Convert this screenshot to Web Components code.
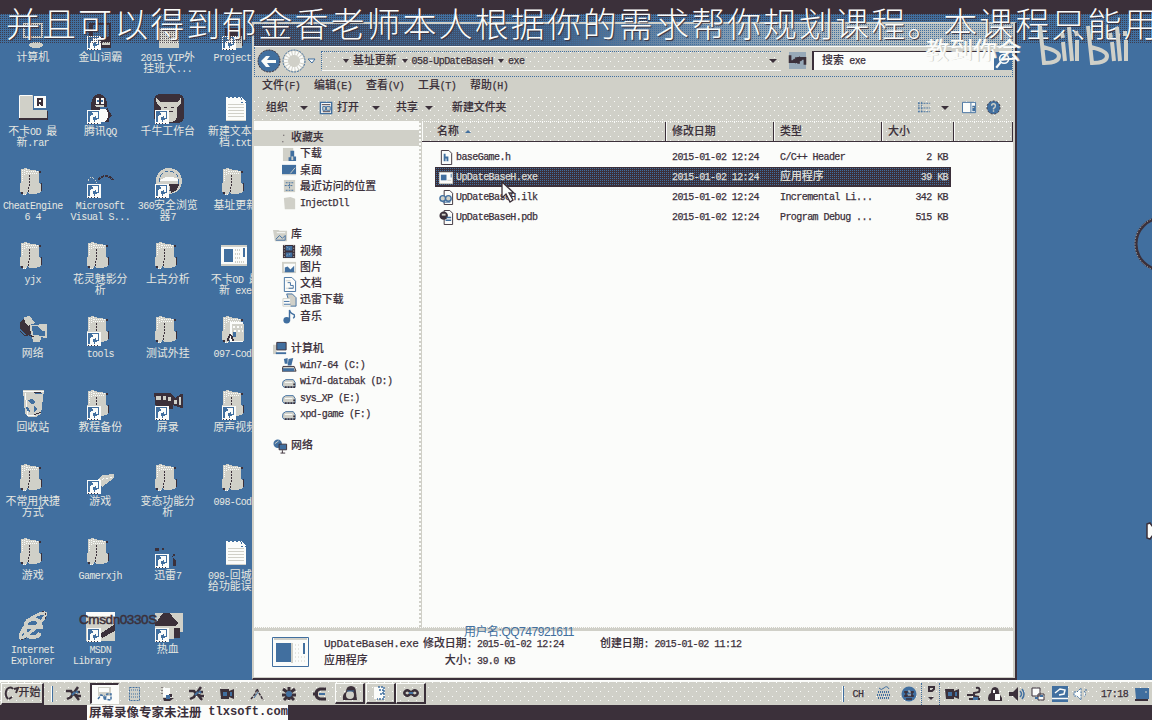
<!DOCTYPE html>
<html lang="zh"><head><meta charset="utf-8"><title>Desktop</title>
<style>
html,body{margin:0;width:1152px;height:720px;overflow:hidden;background:#3b303a}
body{font:10.9px/16px "Liberation Mono","Noto Sans CJK SC",monospace;color:#3b303a;position:relative}
</style></head><body>
<desk-screen></desk-screen>
<script>
const BASE=`:host{display:block;box-sizing:border-box}*{box-sizing:border-box}
.l{font-family:"Liberation Mono",monospace;font-size:10px;letter-spacing:-.57px;line-height:0;-webkit-text-stroke:.25px currentColor}
.c{font-family:"Noto Sans CJK SC",sans-serif;font-size:10.9px;line-height:0;font-weight:500;-webkit-text-stroke:.12px currentColor}
.run{white-space:pre}
.noise{background:conic-gradient(at 1px 1px,transparent 75%,#fbfcfa 0) 0 0/8px 9px,conic-gradient(at 1px 1px,transparent 75%,#fbfcfa 0) 4px 5px/8px 9px,#d0d0c8}`;
const run=s=>'<span class="run">'+s.replace(/[\x20-\x7e]+|[^\x20-\x7e]+/g,m=>`<span class="${m.charCodeAt(0)<127?'l':'c'}">${m}</span>`)+'</span>';
function define(name,html,css){
  customElements.define(name,class extends HTMLElement{
    connectedCallback(){
      if(this.shadowRoot)return;
      const r=this.attachShadow({mode:'open'});
      r.innerHTML=`<style>${BASE}${css}</style>${typeof html==='function'?html(this):html}`;
    }
  });
}
const D='#3b303a',B='#416f9f',G='#d0d0c8',W='#fbfcfa';
const folder=`<path fill="${D}" d="M22 5h2v12h1v8h-1V7h-2zM4 26h3v2H4z"/><path fill="${G}" d="M4 3l6-1v1l12 2v12l2 1v8l-6 2h-6l-1-3-2 4H6V26H3V17H4z"/><path stroke="${W}" stroke-dasharray="1 1" d="M5 4v12M7 4v6M9 3v5M10 5h11M11 7h9M6 28h3"/><path stroke="${D}" fill="none" stroke-dasharray="2 1" d="M12.500 9v10l-1 1v7"/>`;
const badge=`<path fill="${W}" d="M3 18h14v14H3z"/><path fill="${B}" d="M4 19h11v11H4z"/><path fill="${W}" d="M8 20h6v6h-2v-2h-1v1H9v3h1v2H6v-6h1v-1h2v-2H8zM13 27h2v3h-4v-2h2z"/><path stroke="${D}" stroke-dasharray="1 2" d="M4 31.500h12"/>`;
const page=`<path fill="${W}" d="M7 5h15l5 5v19H7z"/><path stroke="${G}" d="M9 12.500h16M9 15.500h16M9 18.500h16M9 21.500h16M9 24.500h16M7 28.500h20"/><path stroke="${B}" stroke-dasharray="2 2" d="M9 5.500h13M22 6v4h5"/>`;
const exe=`<path fill="${W}" d="M2 6h26v20H2z"/><path fill="${G}" d="M2 5h26v2H2zM2 24h26v2H2z"/><path fill="${B}" d="M5 9h9v13H5zM24 8h2v9h-2z"/><path fill="none" stroke="${G}" stroke-width="2" stroke-dasharray="1 1" d="M16 10h6M16 14h6M16 18h6M16 22h10"/>`;
const peng=`<path fill="${D}" d="M7 18C7 7 9 2 15 2s8 5 8 13l5 9-3 2v4H8z"/><ellipse cx="19" cy="23" rx="5" ry="7" fill="${W}"/><path fill="${W}" d="M12 6h3v6h-3zM17 6h3v6h-3z"/><path fill="${B}" d="M13 8h2v2h-2zM17 8h2v2h-2zM16 15h7v2h-7z"/><path fill="${G}" d="M11 13h9v2h-8z"/>`;
const big={
folder,page,exe,peng:peng+badge,
folderl:folder+badge,
pc:`<path fill="${G}" d="M6 5h20v15H6z"/><path fill="${B}" d="M8 7h16v11H8z"/><ellipse cx="19" cy="27" rx="7" ry="3" fill="${G}"/>`,
word:`<path fill="${D}" d="M5 5h22v25H5z"/><path fill="${B}" d="M9 7h16v12H9z"/><path fill="${G}" d="M18 24h8v3h-8z"/>`+badge,
game:`<path fill="${G}" d="M7 10h20v20H7z"/><path stroke="${W}" stroke-dasharray="2 2" d="M8 16.500h19M8 20.500h19M8 24.500h19"/>`,
proj:`<path fill="${D}" d="M6 10h18v18H6z"/><path fill="${G}" d="M16 18h7v12h-7z"/>`+badge,
rar:`<path fill="${D}" d="M3 4h13v15h15v9H2z"/><path fill="${G}" d="M2 3h14v15h14v8H2z"/><path stroke="${W}" d="M2.500 4v22M3 3.500h12"/><path fill="${W}" d="M17 4h12v12H17z"/><path fill="none" stroke="${D}" stroke-width="2" d="M21 14V7h4v4h-4M23 11l3 3"/>`,
bull:`<rect x="2" y="2" width="30" height="29" rx="6" fill="${D}"/><path fill="${G}" d="M4 5q3 6 8 5h10q5 1 7-5 2 7-4 10v10q-1 5-8 5-8 0-8-7v-8q-6-3-5-10z"/><path stroke="${D}" d="M12 15h3M19 15h3M14 19h7"/>`+badge,
vs:`<path fill="none" stroke="${D}" stroke-width="2" stroke-dasharray="3 1" d="M14 14q8-8 15 0"/><path fill="none" stroke="${G}" stroke-dasharray="2 1" d="M4 15q4-8 9 2"/>`+badge,
b360:`<circle cx="17" cy="15" r="13" fill="${G}"/><circle cx="17" cy="15" r="10" fill="none" stroke="${B}" stroke-dasharray="4 2"/><path fill="${D}" d="M17 18h10q-1 7-8 9z"/><path fill="${W}" d="M8 14q9-6 18-1v2H8z"/>`+badge,
net:`<path fill="${D}" d="M3 8l6-5 5 5v12l-5 1-6-6z"/><path fill="${G}" d="M7 3l6-1 5 7-7 3-3-4zM15 22h10l-2 6h-7z"/><path fill="${G}" d="M13 11l17-1v14l-16-2z"/><path fill="${B}" d="M15 12h13v10l-12-1z"/><path fill="${G}" d="M21 12h7v5h-3z"/><path fill="none" stroke="${D}" d="M12 12v9l5 2M3 17l5 5 5-2"/>`,
bin:`<path fill="${G}" d="M6 2h21l-3 24-5 3H11l-3-3z"/><path stroke="${W}" d="M6 3h21M8 5l3 22M10 27h8"/><path fill="${B}" d="M11 12l4-1 3 3-2 2h-2zM9 19l3 1 1 4-3-1zM17 18l4 3-4 3zM18 5h7v1h-7z"/><path stroke="${D}" d="M17 27l7-3M17 4.500h7"/>`,
cam:`<path fill="${D}" d="M2 5h17l4 5 6-4h2v14h-2l-8-3v4H4z"/><path fill="${G}" d="M4 8h5v4H4zM11 8h3v4h-3zM16 9h3v4h-3zM22 12h3v4h-3zM27 9h2v8h-2z"/>`+badge,
script:folder+`<path fill="${W}" d="M11 8h13v20H11z"/><path fill="${G}" d="M13 10h12v17H13z"/><path stroke="${W}" stroke-width="2" stroke-dasharray="2 2" d="M14 13h9M15 17h9"/><path fill="none" stroke="${D}" stroke-width="2" d="M9 27q2-12 5 0"/><path fill="${B}" d="M14 18h3v5h-3z"/>`,
gun:`<path fill="${G}" d="M12 19l7-6 11-1v4l-12 9z"/><path stroke="${W}" stroke-dasharray="2 2" d="M14 18l15-3"/>`+badge,
xun:`<path fill="${D}" d="M3 12h4v3H3zM10 12h2v2h-2zM19 20h4v-2h-2v12h3v-5z"/>`+badge,
ie:`<path fill="none" stroke="${G}" stroke-width="4" d="M10 17h14q-1-8-8-8t-8 9 8 9q5 0 7-4"/><path fill="none" stroke="${G}" stroke-width="3" d="M7 17q-6 12-3 11 6-1 19-15Q32 2 27 3 22 3 13 9"/><path fill="none" stroke="${D}" stroke-dasharray="2 2" d="M25 2q6-1 3 7M4 29q3 2 6-2"/>`,
msdn:`<path fill="${G}" d="M2 2h29v29H2z"/><path fill="${W}" d="M2 2h29v4H2z"/><path fill="${D}" d="M16 24l15-10v7L18 28z"/>`+badge,
hot:`<path fill="${G}" d="M3 3h28v19H3z"/><path fill="${D}" d="M3 14L11 3h7l5 7 3 3-2 3H3zM22 18h6v10h-6z"/><path fill="${G}" d="M17 18h5v11h-5z"/>`+badge
};
const sm={
h:`<path fill="${W}" stroke="${D}" d="M2.500.5h8l3 3v12h-11z"/><path fill="none" stroke="${B}" stroke-width="2" d="M6 4v8M6 8h3v4"/>`,
exe:`<path fill="${W}" stroke="${G}" d="M.5 2.500h14v12H.5z"/><path fill="${B}" d="M2 5h6v6H2z"/><path stroke="${B}" d="M13 4v4"/><path stroke="${G}" d="M9 11h4"/>`,
ilk:`<path fill="${W}" stroke="${D}" d="M5.500.5h6l3 3v12h-9z"/><circle cx="4" cy="9" r="3" fill="${G}" stroke="${B}" stroke-width="1.500"/><circle cx="10" cy="9" r="3" fill="${G}" stroke="${B}" stroke-width="1.500"/><path stroke="${B}" d="M4 13h8"/>`,
pdb:`<path fill="${W}" stroke="${D}" d="M5.500.5h6l3 3v12h-9z"/><circle cx="5" cy="6" r="4.500" fill="${D}"/><path stroke="${G}" stroke-width="2" d="M3 5h4"/><path stroke="${B}" stroke-width="1.500" d="M8 8h5M7 11h6"/>`,
fav:`<path fill="${D}" d="M11 4h1v1h-1zM10 11h1v1h-1z"/>`,
dl:`<path fill="${G}" d="M1 1h11v14H1z"/><path fill="${B}" d="M9 4h4v6h2v5H7v-4h2z"/><path fill="${G}" d="M10 10h2v4h-2z"/>`,
desk:`<path fill="${B}" d="M0 2h15v10H0z"/><path stroke="${G}" d="M0 12.500h15M9 11l5-6"/>`,
rec:`<path fill="${G}" d="M2 1h12v13H2z"/><path fill="none" stroke="${B}" stroke-dasharray="2 1" d="M4 4h8M3 7h9M4 12h9M8 5v6"/>`,
fold:`<path fill="${G}" d="M2 2l7-1 5 2v11H3z"/>`,
lib:`<path fill="${G}" d="M0 2h6l1 1h8v11H2z"/><path stroke="${B}" fill="none" d="M3 12l4-4 3 3 3-3v5H3"/><path stroke="${W}" d="M4 5h9"/>`,
vid:`<path fill="${D}" d="M1 1h13v14H1z"/><path fill="${B}" d="M4 2h7v5H4zM4 9h7v5H4z"/><path stroke="${G}" stroke-dasharray="1 2" d="M2.500 1v14M12.500 1v14M5 3l4 3M5 12l5-2"/>`,
pic:`<path fill="${G}" d="M0 2h15v12H0z"/><path fill="${W}" d="M2 4h12v8H2z"/><path fill="${B}" d="M3 13V8l3-1 3 3 4-4v7z"/>`,
doc:`<path fill="${W}" stroke="${B}" d="M2.500.5h8l4 4v11h-12z"/><path stroke="${G}" d="M4 4h5M4 12h8"/><path fill="none" stroke="${B}" d="M6 6h3v3h3v3H7"/>`,
xl:`<path fill="${G}" stroke="${B}" d="M5 1h6l4 4v9H9z"/><path fill="${W}" stroke="${G}" d="M1 6h8v8H1z"/><path stroke="${B}" d="M2 9h6M2 12h7"/>`,
mus:`<circle cx="5" cy="12" r="3.500" fill="${B}"/><path fill="none" stroke="${B}" stroke-width="1.500" d="M8 13V1q1 4 5 5 1 2-1 4"/>`,
pc:`<path fill="${G}" d="M0 4h4v10H0z"/><path fill="${B}" stroke="${D}" d="M4 1.500h10v8H4z"/><path stroke="${B}" stroke-width="2" d="M3 13h11"/>`,
win:`<path fill="${G}" stroke="${D}" d="M1 9h12l2 5H0z"/><path fill="${B}" d="M2 1l4-1v6H3zM7 1l5-1-2 8H6zM1 11h12v3H1z"/>`,
drv:`<path fill="${G}" stroke="${B}" d="M1 8l3-2h8l2 3v5H2L.5 12z"/><path stroke="${D}" stroke-width="2" stroke-dasharray="2 1" d="M3 14h11M12 11h3"/><path stroke="${W}" d="M3 9h8"/>`,
net:`<circle cx="5" cy="5" r="4.500" fill="${B}"/><path stroke="${G}" fill="none" d="M2 5l4-3"/><path fill="${B}" stroke="${D}" d="M6.500 5.500h8v6h-8zM10 12v3M8 15h5"/>`,
open:`<path fill="${W}" stroke="${B}" stroke-width="1.500" d="M1.500 2.500h12v12h-12z"/><path stroke="${D}" d="M3 5h9M4 12.500h8"/><path fill="${G}" stroke="${B}" d="M4 7h3v4H4zM8 7h4v4H8z"/>`,
view:`<path stroke="${B}" stroke-dasharray="2 1" d="M1 3.500h13M1 8.500h13M1 12.500h13M2 2v12M5 2v12"/>`,
pane:`<path fill="${W}" stroke="${B}" d="M.5 2.500h14v11H.5z"/><path fill="${B}" d="M9 3h1v10H9zM11 6h3v6h-3z"/><path stroke="${G}" d="M11 8h2"/>`,
help:`<circle cx="8" cy="8" r="7" fill="${B}" stroke="${D}" stroke-dasharray="2 2"/><path fill="none" stroke="${G}" stroke-width="1.500" d="M6 6q0-2 2-2t2 2-2 3v1M8 11v1.500"/>`,
ball:`<circle cx="8" cy="8" r="7.500" fill="${B}"/><path stroke="${D}" stroke-width="1.500" d="M3 6h4M9 6h4M3 10h10M5 5v6M11 5v6M5 13h6"/><path stroke="${G}" d="M7 5h2v2M7 9h3"/>`,
refresh:`<path fill="${B}" d="M0 0h16v16H0z" opacity=".4"/><path fill="none" stroke="${D}" stroke-width="2.500" d="M1 3v6h6V5M4 7l3 3M15 12V6H9v5M12 8L9 5"/>`,
search:`<path fill="${B}" d="M0 0h16v16H0z"/><circle cx="9" cy="6" r="4" fill="none" stroke="${W}" stroke-width="1.500"/><path stroke="${W}" stroke-width="2" d="M6 9l-4 5"/>`,
star:`<path fill="none" stroke="${D}" stroke-width="2.500" d="M0 5h5l2 3 5-7M7 7l-2 4-4 2M7 8l5 2h3M9 9l4 5M11 6h3"/><path stroke="${B}" stroke-width="2" d="M6 9l3-3M10 5l2 2"/>`,
explorer:`<path fill="${G}" d="M1 1h13v9H1z"/><path fill="${W}" d="M2 2h10v4H2z"/><path stroke="${B}" fill="none" stroke-width="1.500" stroke-dasharray="3 1" d="M1 13l3-4 3 1v4M8 13l2-5h4v6z"/>`,
calc:`<path fill="${G}" stroke="${B}" stroke-dasharray="2 1" d="M2.500 1.500h10v13h-10z"/><path stroke="${B}" stroke-dasharray="1 1" d="M4 4h7M4 8h8M4 11h8"/>`,
user:`<path fill="${W}" d="M4 2h7v9H4z"/><path fill="${D}" d="M4 12h11l-4 3H5zM10 8h3v3h-3z"/><path fill="${B}" d="M7 9h4v4H7z"/><path stroke="${D}" stroke-dasharray="1 2" d="M3 1v9"/>`,
camera:`<path fill="${D}" d="M1 3h9v2l5-2v10l-5-2v2H2z"/><path fill="${B}" d="M4 6h4v4H4zM11 6h2v4h-2z"/>`,
tri:`<path fill="none" stroke="${D}" stroke-width="1.500" stroke-dasharray="3 1" d="M1 13l4-5 2-5 2 4 4 7"/><path stroke="${B}" d="M4 12l4-6"/>`,
bug:`<path fill="none" stroke="${D}" stroke-width="3" d="M2 3l4 3M14 3l-4 3M1 9h14M3 14l4-4M13 14l-4-4M8 1v13"/><circle cx="8" cy="8" r="3" fill="${B}"/>`,
euro:`<path fill="none" stroke="${D}" stroke-width="3" d="M14 3H8Q4 4 4 8t4 5h6M1 8h5"/><path stroke="${B}" stroke-width="2" d="M7 8h6"/>`,
qq:`<path fill="${D}" d="M1 15Q0 9 4 7q0-6 5-6t5 6l1 8z"/><ellipse cx="8" cy="10" rx="4" ry="4" fill="${G}"/><path stroke="${B}" d="M5 6h7"/>`,
note:`<path fill="${W}" stroke="${G}" d="M1.500 1.500h12v13h-12z"/><path fill="none" stroke="${B}" stroke-width="1.500" stroke-dasharray="2 1" d="M6 2h6v12H5M7 5h4v4H8"/>`,
inf:`<path fill="none" stroke="${D}" stroke-width="2.500" d="M8 8Q5 4 2.500 6t0 4T8 8q3-4 5.500-2t0 4T8 8z"/><path stroke="${B}" stroke-width="2" d="M6 8h4"/>`,
kb:`<path stroke="${B}" stroke-width="2" stroke-dasharray="1 1" d="M2 6h12M1 9h14M2 12h12"/><path fill="none" stroke="${B}" d="M3 2q2 3 5 0t5 1"/>`,
opt:`<path fill="none" stroke="${D}" stroke-width="2" d="M6 1h5v2l-2 2H6z"/><path fill="${D}" d="M5 11h6l-3 3z"/>`,
run:`<path fill="none" stroke="${D}" stroke-width="2" d="M10 2q5-1 3 4l-5 1v3l5 1M1 9h6M3 13h11"/><path fill="${B}" d="M7 11h5v3H7z"/>`,
peng2:`<path fill="${D}" d="M1 13Q1 8 4 7q0-6 4-6t4 6l3 5v3H2z"/><path fill="${W}" d="M6 4h2v3H6zM8 8h5v6H8z"/>`,
spk:`<path fill="${D}" d="M0 6h4l5-5v14l-5-5H0z"/><path fill="none" stroke="${B}" stroke-width="1.500" d="M11 5q3 3 0 6M13 3q4 5 0 10"/>`,
plug:`<path fill="${W}" stroke="${D}" d="M2 2h8v8H2zM8 8h6v6H8z"/><path stroke="${B}" stroke-width="2" d="M5 12h3M10 10h3"/>`,
sw:`<path fill="${B}" d="M0 0h16v16H0z"/><path fill="none" stroke="${W}" stroke-width="1.500" d="M0 12.500h16M3 7l5-4 5 1-1 4-5 1"/>`,
spk2:`<path fill="${W}" stroke="${B}" stroke-dasharray="2 1" d="M1 6h3l4-4v12l-4-4H1zM11 5q3 3 0 6M13 3v3"/>`,
mon:`<path fill="${B}" d="M1 2h14v11H2z"/><path fill="${D}" d="M1 13h13v2H1z"/><path stroke="${G}" d="M12 5v2"/>`
};
define('big-icon',e=>`<svg width="32" height="32" viewBox="0 0 32 32" fill="none" shape-rendering="crispEdges">${big[e.getAttribute('name')]}</svg>`,`:host{width:32px;height:32px}svg{display:block}`);
define('small-icon',e=>`<svg width="100%" height="100%" viewBox="0 0 16 16" fill="none">${sm[e.getAttribute('name')]}</svg>`,`:host{width:16px;height:16px;flex:none}svg{display:block}`);

define('desk-item',e=>`<big-icon name="${e.getAttribute('icon')}"></big-icon><div>${e.getAttribute('label').split('|').map(t=>`<p>${run(t)}</p>`).join('')}</div>`,
`:host{height:74px;width:67.5px;display:flex;flex-direction:column;align-items:center;color:#e6e7e1}
.l,.c{-webkit-text-stroke:0;font-weight:400}
div{margin-top:3px}p{margin:0;height:11px;line-height:11px;display:flex;justify-content:center;white-space:nowrap}`);
const items=[
['pc','计算机'],['rar','不卡OD 最|新.rar'],['folder','CheatEngine|6 4'],['folder','yjx'],['net','网络'],['bin','回收站'],['folder','不常用快捷|方式'],['folder','游戏'],['ie','Internet|Explorer'],
['word','金山词霸'],['peng','腾讯QQ'],['vs','Microsoft|Visual S...'],['folder','花灵魅影分|析'],['folderl','tools'],['folderl','教程备份'],['gun','游戏'],['folder','Gamerxjh'],['msdn','MSDN|Library   '],
['game','2015 VIP外|挂班大...'],['bull','千牛工作台'],['b360','360安全浏览|器7'],['folder','上古分析'],['folder','测试外挂'],['cam','屏录'],['folder','变态功能分|析'],['xun','迅雷7'],['hot','热血'],
['proj','Project1'],['page','新建文本文|档.txt'],['folder','基址更新'],['exe','不卡OD 最|新 exe'],['script','097-Code'],['folderl','原声视频'],['folder','098-Code'],['page','098-回城补|给功能误..']];
define('desktop-grid',items.map(([i,l])=>`<desk-item icon="${i}" label="${l}"></desk-item>`).join(''),
`:host{display:grid;grid-auto-flow:column;grid-template-rows:repeat(9,74px);grid-auto-columns:67.5px;width:253px;margin-left:-1px;overflow:hidden;padding-top:4px;height:667px}`);

define('address-bar',`<span class="nav back"><svg width="24" height="24" viewBox="0 0 24 24"><circle cx="12" cy="12" r="11" fill="${B}" stroke="${D}" stroke-dasharray="2 1"/><path d="M19 11h-9l3-4h-4l-5 5 5 6h4l-3-4h9z" fill="${W}"/></svg></span>
<span class="nav"><svg width="24" height="24" viewBox="0 0 24 24"><circle cx="12" cy="12" r="11" fill="${G}" stroke="${B}" stroke-dasharray="2 1"/><circle cx="12" cy="12" r="8" fill="none" stroke="${W}" stroke-width="4" stroke-dasharray="2 1"/></svg></span>
<svg width="10" height="8" viewBox="0 0 10 8"><path d="M1 2h7L5 6z" fill="${W}" stroke="${B}"/></svg>
<div class="path noise"><i></i>${run('基址更新')}<i></i>${run('058-UpDateBaseH')}<i></i>${run('exe')}<i class="end"></i></div>
<small-icon name="refresh"></small-icon><div class="find">${run('搜索 exe')}</div><small-icon name="search"></small-icon>`,
`:host{height:30px;display:flex;align-items:center;border:1px dotted ${B};border-top:0;padding:0 0 2px 2px;background:${G}}
.nav{width:24px;height:24px;margin-right:1px}.path{margin-left:4px;width:460px;height:20px;border:1px dotted ${B};border-bottom:1px solid ${W};border-right:0;display:flex;align-items:center;padding-left:21px;line-height:14px}
i{border:3px solid transparent;border-top:4px solid ${D};border-bottom:0;margin:0 4px 0 0}.run+i{margin-left:5px}.end{margin:0 0 0 auto!important;position:relative;left:-4px;border-width:4px 4px 0}
.path+small-icon{width:19px;height:17px;margin:0 5px 0 7px}.find{width:182px;height:19px;border:1px solid ${D};border-left-width:2px;background:${W};padding-left:8px;line-height:18px;border-bottom:0;border-right:0}
.find+small-icon{width:18px;height:18px}`);
define('menu-bar',['文件(F)','编辑(E)','查看(V)','工具(T)','帮助(H)'].map(t=>`<div>${run(t)}</div>`).join(''),
`:host{height:20px;display:flex;padding-left:8px;line-height:19px;background:${G}}div{width:52px;white-space:nowrap}`);
define('tool-bar',`<span style="width:34px">${run('组织')}</span><i></i><small-icon style="margin-left:11px" name="open"></small-icon><span style="margin-left:3px;width:35px">${run('打开')}</span><i></i><span style="margin-left:16px;width:29px">${run('共享')}</span><i></i><span style="margin-left:19px">${run('新建文件夹')}</span><b></b><small-icon name="view"></small-icon><i style="margin:0 13px 0 9px"></i><small-icon name="pane"></small-icon><small-icon name="help" style="margin:0 12px 0 9px"></small-icon>`,
`:host{height:24px;display:flex;align-items:center;padding:0 0 3px 12px}small-icon{width:15px;height:15px}i{border:4px solid transparent;border-top-color:${D};border-bottom:0}b{flex:1}`);
define('side-item',e=>`<small-icon name="${e.getAttribute('icon')}"></small-icon>${run(e.textContent)}`,
`:host{height:16.25px;display:flex;align-items:center;padding-left:28px;gap:3px;line-height:16px}:host([root]){padding-left:19px}:host([sel]){background:${G}}small-icon{width:15px;height:15px}`);
const grp=a=>`<div class="g">${a.map(([i,t],n)=>`<side-item icon="${i}" ${n?'':'root'} ${i==='fav'?'sel':''}>${t}</side-item>`).join('')}</div>`;
define('side-nav',grp([['fav','收藏夹'],['dl','下载'],['desk','桌面'],['rec','最近访问的位置'],['fold','InjectDll']])+grp([['lib','库'],['vid','视频'],['pic','图片'],['doc','文档'],['xl','迅雷下载'],['mus','音乐']])+grp([['pc','计算机'],['win','win7-64 (C:)'],['drv','wi7d-databak (D:)'],['drv','sys_XP (E:)'],['drv','xpd-game (F:)']])+grp([['net','网络']]),
`:host{width:167px;background:${W};padding-top:9px;border-right:2px dotted ${G}}.g{margin-bottom:16px}`);
define('file-row',e=>{const d=e.getAttribute('data').split('|');return `<small-icon name="${d[0]}"></small-icon><span class="n">${run(d[1])}</span><span class="d">${run(d[2])}</span><span class="t">${run(d[3])}</span><span class="s">${run(d[4])}</span>`},
`:host{height:20px;display:flex;align-items:center;margin-left:13px;width:516px;padding:0 3px 0 4px;line-height:19px}
:host([sel]){background:conic-gradient(at 1px 1px,transparent 75%,${B} 0) 0 0/2px 2px,${D};color:#dcddd6;border:1px solid ${D}}
small-icon{width:15px;height:15px}.n{margin-left:2px;width:216px}.d{width:108px}.t{width:108px}.s{flex:1;text-align:right}:host([sel]){padding:0 2px 0 3px}`);
define('file-list',`<header class="noise"><span style="width:244px;padding-left:15px">${run('名称')} <i></i></span><span style="width:108px">${run('修改日期')}</span><span style="width:108px">${run('类型')}</span><span style="width:72px">${run('大小')}</span><span style="width:59px"></span></header>
<div><file-row data="h|baseGame.h|2015-01-02 12:24|C/C++ Header|2 KB"></file-row><file-row sel data="exe|UpDateBaseH.exe|2015-01-02 12:24|应用程序|39 KB"></file-row><file-row data="ilk|UpDateBaseH.ilk|2015-01-02 12:24|Incremental Li...|342 KB"></file-row><file-row data="pdb|UpDateBaseH.pdb|2015-01-02 12:24|Program Debug ...|515 KB"></file-row></div>`,
`:host{flex:1;background:${W};border-left:1px solid ${G}}header{height:21px;display:flex;border-bottom:1px solid ${D};border-top:1px dotted ${W}}header>span{border-right:1px solid ${D};box-shadow:inset 1px 0 ${W};padding-left:6px;line-height:20px}i{display:inline-block;border:3px solid transparent;border-bottom-color:${B};border-top:0;vertical-align:2px}div{padding-top:5px}`);
define('details-pane',`<svg width="38" height="32" viewBox="0 0 38 32" fill="none"><path fill="${W}" stroke="${B}" d="M.5 1.500h36v29H.5z"/><path stroke="${G}" stroke-width="2" d="M2 3h33"/><path fill="${B}" d="M4 7h15v19H4zM31 7h2v11h-2z"/><path stroke="${G}" stroke-width="2" d="M20 7v20"/><path stroke="${G}" stroke-dasharray="1 2" d="M23 9h6M23 13h6M23 17h6M23 21h10M23 25h10"/></svg>
<div style="width:99px" class="w">${run('UpDateBaseH.exe')}<br>${run('应用程序')}</div><div style="width:49px;text-align:right">${run('修改日期:')}<br>${run('大小:')}</div><div style="width:128px;padding-left:5px">${run('2015-01-02 12:24')}<br>${run('39.0 KB')}</div><div>${run('创建日期: 2015-01-02 11:12')}</div>`,
`:host{height:46px;background:${W};display:flex;padding:5px 0 0 18px;line-height:16.5px}svg{margin:0 14px 0 0;flex:none}div{white-space:nowrap}.w .l{font-size:11px;letter-spacing:-.3px}`);
define('explorer-window',`<div class="title"></div><div class="body noise"><address-bar></address-bar><menu-bar></menu-bar><tool-bar></tool-bar><main><side-nav></side-nav><file-list></file-list></main><div class="split"></div><details-pane></details-pane></div>`,
`:host{width:765px;height:658px;border:1px solid ${G};border-right:2px solid ${D};border-bottom:2px solid ${D};background:${G};padding:1px 2px 1px 1px;display:flex;flex-direction:column}
.title{height:22px;background:linear-gradient(90deg,transparent 40%,rgba(208,208,200,.8) 80%),linear-gradient(90deg,rgba(59,48,58,.75),rgba(59,48,58,.35) 35%,transparent 60%),${B};position:relative}
.title:after{content:"";position:absolute;inset:0;background:conic-gradient(at 1px 1px,transparent 75%,${B} 0) 0 0/2px 2px}
.body{flex:1;display:flex;flex-direction:column;border-top:1px solid ${W}}main{flex:1;display:flex;min-height:0}.split{height:4px;background:${G};border-top:1px dotted ${W}}`);
const cell=(n,w,c='')=>`<span class="${c}" style="width:${w}px"><small-icon name="${n}"></small-icon></span>`;
define('task-bar',`<span class="start"><svg width="15" height="15" viewBox="0 0 15 15"><path d="M3 3q4-3 6 0M3 3q-3 6 1 10M10 3l4-1-2 5M5 13l3-2" stroke="${D}" stroke-width="2" fill="none"/></svg><b>${run('开始')}</b></span><span class="sep" style="width:12px"><i></i></span>
${cell('star',32)}${cell('explorer',29,'press')}${cell('calc',32)}${cell('user',31)}${cell('star',30)}${cell('camera',30)}${cell('tri',31)}${cell('bug',31)}${cell('euro',31)}${cell('qq',30,'btn')}${cell('note',30,'btn')}${cell('inf',30,'btn')}
<span class="gap"></span><span class="sep" style="width:4px"><i></i></span><span style="width:26px">${run('CH')}</span>${cell('kb',26)}${cell('ball',24)}${cell('opt',19,'opt')}${cell('camera',23)}${cell('run',21)}${cell('peng2',22)}${cell('spk',21)}${cell('plug',22)}${cell('sw',21)}${cell('spk2',22)}<span style="width:45px">${run('17:18')}</span>${cell('mon',10)}`,
`:host{height:25px;display:flex;align-items:center;border-top:2px solid ${W};padding-right:5px}
:host>span{height:22px;display:flex;align-items:center;justify-content:center;flex:none}:host>span.gap{flex:1}.start{width:43px;margin:0 2px 0 1px;border:1px solid ${W};border-right:2px solid ${D};border-bottom:2px solid ${D}}.start svg{flex:none}
.sep i{width:2px;height:16px;border-left:1px solid ${W};border-right:1px solid ${B}}.btn,.press{height:21px!important;border:1px solid ${W};border-right:2px solid ${D};border-bottom:2px solid ${D}}.press{border:1px solid ${W};border-top:2px solid ${D};border-left:2px solid ${D};background:${W}}.btn{margin-right:.5px}.opt{border-left:1px dotted ${B};border-right:1px dotted ${B}}`);
define('screen-overlays',`<div class="mq"><slot></slot></div><div class="wm">教到你会</div><svg class="bili" width="96" height="46" viewBox="0 0 96 46"><g fill="none" stroke="${G}" stroke-width="4"><path d="M4 2l4 37q15 0 15-7 0-5-16-9M27 18l2 19M26 9l1 5M33 3l3 34M41 16v21M40 7l1 5M52 2l4 37q15 0 15-7 0-5-16-9M76 18l2 19M74 9l1 5M81 3l3 34M90 16v21M89 7v5"/></g></svg>
<div class="ms">Cmsdn0330S</div><div class="qq">用户名:QQ747921611</div>
<svg class="cur" width="16" height="24" viewBox="0 0 16 24"><path d="M1 1v16l4-4 4 8 3-2-4-7h5z" fill="${W}" stroke="${D}" stroke-width="1.300"/></svg>
<svg class="ring" width="20" height="58" viewBox="0 0 20 58"><circle cx="30" cy="29" r="26" fill="none" stroke="${D}" stroke-width="3"/><circle cx="30" cy="29" r="27" fill="none" stroke="${G}" stroke-width="1" stroke-dasharray="1 2"/></svg>
<svg class="arr" width="6" height="18" viewBox="0 0 6 18"><path d="M1 2l3-1 6 8-6 8-3-1z" fill="${W}" stroke="${D}" stroke-width="1.500"/></svg>`,
`:host{position:absolute;inset:0;overflow:hidden;pointer-events:none}:host>*{position:absolute}
.mq{left:6px;top:0;height:45px;line-height:45px;white-space:nowrap;font-family:"Noto Sans CJK SC",sans-serif;font-weight:300;font-size:34px;letter-spacing:2.05px;color:${W};text-shadow:1px 1px 1px ${D}}
.wm{left:925px;top:35px;font:400 24px/28px "Noto Sans CJK SC",sans-serif;color:${W};text-shadow:1px 0 ${G}}.bili{left:1036px;top:24px}
.ms{left:79px;top:611px;font:13.5px/17px "Liberation Sans",sans-serif;letter-spacing:-.4px;color:${D};-webkit-text-stroke:.5px}
.qq{left:464px;top:624px;font:12px/16px "Liberation Sans","Noto Sans CJK SC",sans-serif;color:${B};letter-spacing:-.48px}
.cur{left:501px;top:181px}.ring{left:1132px;top:215px}.arr{left:1146px;top:522px}`);
define('desk-screen',`<div class="top"></div><div class="desk"><desktop-grid></desktop-grid><explorer-window></explorer-window></div><task-bar class="noise"></task-bar><footer><span>屏幕录像专家未注册</span><em>tlxsoft.com</em></footer><screen-overlays>并且可以得到郁金香老师本人根据你的需求帮你规划课程。本课程只能用</screen-overlays>`,
`:host{position:relative;width:1152px;height:720px;background:${D};overflow:hidden}.top{height:14px}.desk{height:666px;display:flex;align-items:flex-start;background:${B};position:relative}
.desk:before{content:"";position:absolute;left:0;right:0;top:0;height:29px;background:conic-gradient(at 1px 1px,transparent 75%,${D} 0) 0 0/2px 2px;opacity:.8}
explorer-window{margin-top:8px;position:relative}footer{margin-left:87px;width:201px;height:15px;background:${W};display:flex;justify-content:space-between;padding:0 0 0 2px;line-height:14px;font-family:"Noto Sans CJK SC",sans-serif;font-weight:700;font-size:12.5px;white-space:nowrap}em{font:bold 12.100px/14px "Liberation Mono",monospace}`);
</script></body></html>
